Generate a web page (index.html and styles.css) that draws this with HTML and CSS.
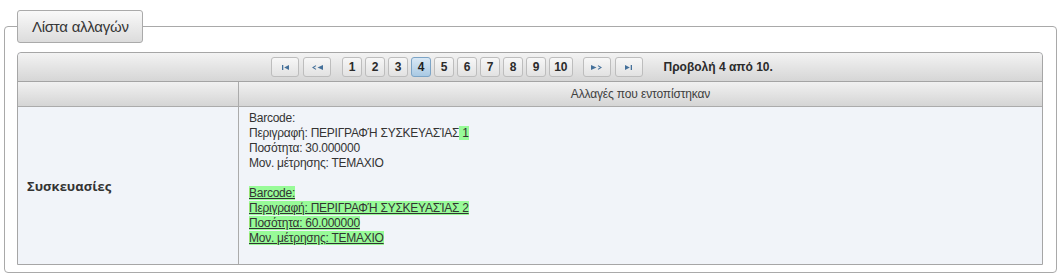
FILE: index.html
```html
<!DOCTYPE html>
<html lang="el">
<head>
<meta charset="utf-8">
<title>Λίστα αλλαγών</title>
<link rel="stylesheet" href="styles.css">
</head>
<body>
<div class="page">
  <fieldset class="panel">
    <legend class="panel-title">Λίστα αλλαγών</legend>
    <div class="grid">
      <div class="pager">
        <div class="pager-nav">
          <span class="pbtn nav"><svg width="7" height="5" viewBox="0 0 7 5"><rect x="0" y="0" width="1.3" height="5" fill="#44709a"/><polygon points="7,0 2.2,2.5 7,5" fill="#44709a"/></svg></span>
          <span class="pbtn nav"><svg width="11" height="5" viewBox="0 0 11 5"><polyline points="4,0.6 1,2.5 4,4.4" fill="none" stroke="#44709a" stroke-width="1.1"/><polygon points="11,0 5.5,2.5 11,5" fill="#44709a"/></svg></span>
        </div>
        <div class="pager-pages">
          <span class="pbtn num">1</span>
          <span class="pbtn num">2</span>
          <span class="pbtn num">3</span>
          <span class="pbtn num active">4</span>
          <span class="pbtn num">5</span>
          <span class="pbtn num">6</span>
          <span class="pbtn num">7</span>
          <span class="pbtn num">8</span>
          <span class="pbtn num">9</span>
          <span class="pbtn num">10</span>
        </div>
        <div class="pager-nav">
          <span class="pbtn nav"><svg width="11" height="5" viewBox="0 0 11 5"><polygon points="0,0 5.5,2.5 0,5" fill="#44709a"/><polyline points="7,0.6 10,2.5 7,4.4" fill="none" stroke="#44709a" stroke-width="1.1"/></svg></span>
          <span class="pbtn nav"><svg width="7" height="5" viewBox="0 0 7 5"><polygon points="0,0 4.8,2.5 0,5" fill="#44709a"/><rect x="5.7" y="0" width="1.3" height="5" fill="#44709a"/></svg></span>
        </div>
        <div class="pager-info">Προβολή 4 από 10.</div>
      </div>
      <div class="row head">
        <div class="cell c1"></div>
        <div class="cell c2">Αλλαγές που εντοπίστηκαν</div>
      </div>
      <div class="row body">
        <div class="cell c1 label">Συσκευασίες</div>
        <div class="cell c2 changes">
          <div class="line">Barcode:</div>
          <div class="line">Περιγραφή: ΠΕΡΙΓΡΑΦΉ ΣΥΣΚΕΥΑΣΊΑΣ<span class="added"> 1</span></div>
          <div class="line">Ποσότητα: 30.000000</div>
          <div class="line">Μον. μέτρησης: ΤΕΜΑΧΙΟ</div>
          <div class="line blank"></div>
          <div class="line"><span class="added ins">Barcode:</span></div>
          <div class="line"><span class="added ins">Περιγραφή: ΠΕΡΙΓΡΑΦΉ ΣΥΣΚΕΥΑΣΊΑΣ 2</span></div>
          <div class="line"><span class="added ins">Ποσότητα: 60.000000</span></div>
          <div class="line"><span class="added ins">Μον. μέτρησης: ΤΕΜΑΧΙΟ</span></div>
        </div>
      </div>
    </div>
  </fieldset>
</div>
</body>
</html>
```

FILE: styles.css
```css
html, body {
  margin: 0;
  padding: 0;
  background: #ffffff;
}

body {
  font-family: "Liberation Sans", Arial, sans-serif;
  color: #333333;
}

.page {
  padding: 10px 5px 0 4px;
}

.panel {
  margin: 0;
  padding: 9px 13px 7px 12px;
  border: 1px solid #a9a9a9;
  border-radius: 4px;
  min-width: 0;
}

.panel-title {
  margin: 0;
  padding: 0 13px 0 14px;
  height: 31px;
  line-height: 31px;
  font-size: 15px;
  letter-spacing: -0.25px;
  color: #363636;
  border: 1px solid #aaaaaa;
  border-radius: 3px;
  background: linear-gradient(#f9f9f9, #dcdcdc);
}

.grid {
  border: 1px solid #a6a6a6;
  border-radius: 4px 4px 0 0;
  background: #f1f4f9;
}

.pager {
  height: 28px;
  border-bottom: 1px solid #a4a4a4;
  background: linear-gradient(#f3f3f3, #d6d6d6);
  border-radius: 4px 4px 0 0;
  display: flex;
  align-items: center;
  justify-content: center;
  padding-right: 16px;
}

.pager-nav {
  display: flex;
  gap: 4px;
}

.pager-pages {
  display: flex;
  gap: 3px;
  margin: 0 10px 0 11px;
}

.pbtn {
  box-sizing: border-box;
  height: 20px;
  border: 1px solid #bdbdbd;
  border-radius: 3px;
  background: linear-gradient(#f7f7f7, #e2e2e2);
  display: flex;
  align-items: center;
  justify-content: center;
  font-size: 12px;
  font-weight: bold;
  color: #2b2b2b;
}

.pbtn.nav {
  width: 28px;
}

.pbtn.num {
  min-width: 20px;
  padding: 0 4px;
}

.pbtn.active {
  border-color: #7ca4c6;
  background: linear-gradient(#d9e8f5, #a9c9e3);
  color: #1f1f1f;
}

.pager-info {
  margin-left: 21px;
  font-size: 12px;
  font-weight: bold;
  color: #2b2b2b;
}

.row {
  display: grid;
  grid-template-columns: 221px 1fr;
}

.row.head {
  height: 24px;
  border-bottom: 1px solid #ababab;
  background: linear-gradient(#f1f1f1, #d5d5d5);
}

.cell.c1 {
  border-right: 1px solid #ababab;
}

.row.head .c2 {
  font-size: 12px;
  line-height: 24px;
  text-align: center;
  letter-spacing: -0.15px;
  color: #404040;
}

.row.body {
  background: #f1f4f9;
}

.label {
  display: flex;
  align-items: center;
  padding-left: 9px;
  font-family: "Open Sans", "Liberation Sans", sans-serif;
  font-weight: bold;
  font-size: 13px;
  color: #333333;
}

.changes {
  padding: 4px 10px 18px 10px;
  font-size: 12px;
  line-height: 15px;
  letter-spacing: -0.25px;
  color: #333333;
}

.line {
  height: 15px;
  white-space: nowrap;
}

.added {
  background: #98fb98;
}

.added.ins {
  text-decoration: underline;
}
```
